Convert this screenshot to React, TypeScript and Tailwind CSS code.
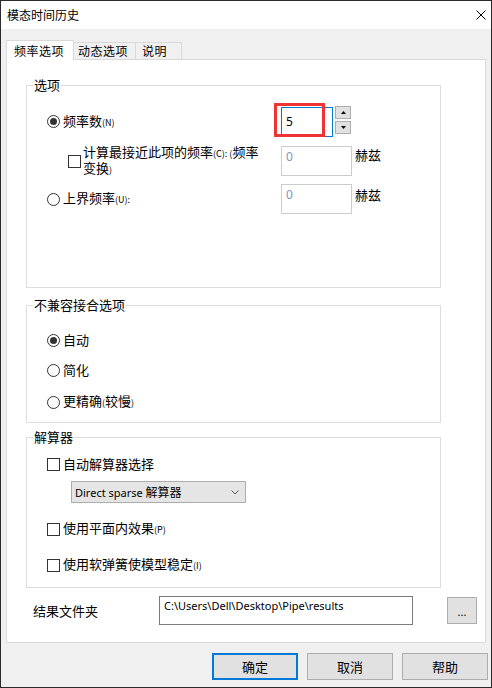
import React from 'react';

const Radio: React.FC<{ checked?: boolean }> = ({ checked }) => (
  <span className="w-[13px] h-[13px] rounded-full border border-[#333333] bg-white flex items-center justify-center shrink-0">
    {checked && <span className="w-[7px] h-[7px] rounded-full bg-[#333333]" />}
  </span>
);

const Check: React.FC = () => (
  <span className="w-[13px] h-[13px] border border-[#333333] bg-white shrink-0" />
);

const Small: React.FC<{ children: React.ReactNode }> = ({ children }) => (
  <span className="text-[9px]">{children}</span>
);

const App: React.FC = () => {
  return (
    <div className="w-[492px] h-[688px] border border-[#2b2b2b] bg-[#f0f0f0] flex flex-col font-['Microsoft_YaHei','Noto_Sans_CJK_SC',sans-serif] text-black text-[13px] leading-[16px]">
      {/* title bar */}
      <div className="h-[28px] bg-white flex items-center pl-[6px] pr-[5px] shrink-0">
        <span className="text-[12px]">模态时间历史</span>
        <svg className="ml-auto" width="10" height="10" viewBox="0 0 10 10">
          <path d="M0.5 0.5 L9.5 9.5 M9.5 0.5 L0.5 9.5" stroke="#000" strokeWidth="1" fill="none" />
        </svg>
      </div>

      <div className="flex-1 flex flex-col pl-[5px] pt-[11px]">
        {/* tabs */}
        <div className="flex items-end h-[19px] text-[12px] tracking-[0.5px]">
          <div className="relative z-10 -mb-px h-[20px] w-[68px] bg-white border border-b-0 border-[#d9d9d9] pl-[7px] flex items-center">
            频率选项
          </div>
          <div className="-ml-px h-[17px] w-[63px] border border-b-0 border-[#d9d9d9] pl-[4px] flex items-center">
            动态选项
          </div>
          <div className="-ml-px h-[17px] w-[47px] border border-b-0 border-[#d9d9d9] pl-[6px] flex items-center">
            说明
          </div>
        </div>

        {/* tab page */}
        <div className="w-[480px] h-[584px] bg-white border border-[#d9d9d9] flex flex-col">
          <fieldset className="ml-[19px] mt-[17px] w-[415px] h-[211px] border border-[#dcdcdc]">
            <legend className="ml-[6px] px-[1px] leading-[16px]">选项</legend>

            <div className="mt-[13px] flex h-[31px]">
              <div className="w-[254px] flex items-center pl-[20px] gap-[3px]">
                <Radio checked />
                <span>频率数<Small>(N)</Small></span>
              </div>
              <div className="relative mt-px w-[52px] h-[30px] border border-[#0078d7] pl-[4px] flex items-center text-[12px] font-['Noto_Sans',sans-serif]">
                5
                <div className="absolute left-[-8px] top-[-5px] w-[51px] h-[34px] border-[3px] border-[#ee3434]" />
              </div>
              <div className="ml-[2px] w-[16px] flex flex-col gap-[2px]">
                <div className="h-[13px] bg-[#e1e1e1] border border-[#adadad] flex items-center justify-center">
                  <svg width="5" height="3" viewBox="0 0 5 3"><path d="M0 3 L2.5 0 L5 3 Z" fill="#000" /></svg>
                </div>
                <div className="h-[13px] bg-[#e1e1e1] border border-[#adadad] flex items-center justify-center">
                  <svg width="5" height="3" viewBox="0 0 5 3"><path d="M0 0 L5 0 L2.5 3 Z" fill="#000" /></svg>
                </div>
              </div>
            </div>

            <div className="mt-[9px] flex h-[30px]">
              <div className="w-[254px] flex items-center pl-[41px] gap-[2px]">
                <Check />
                <span className="leading-[14px]">
                  计算最接近此项的频率<Small>(C): (</Small>频率
                  <br />
                  变换<Small>)</Small>
                </span>
              </div>
              <div className="w-[71px] h-[30px] border border-[#cccccc] pl-[4px] pt-[3px] text-[12px] text-[#7f96b8] font-['Noto_Sans',sans-serif] leading-[14px]">
                0
              </div>
              <span className="ml-[3px] mt-[1px]">赫兹</span>
            </div>

            <div className="mt-[8px] flex h-[30px]">
              <div className="w-[254px] flex items-center pl-[20px] gap-[3px]">
                <Radio />
                <span>上界频率<Small>(U):</Small></span>
              </div>
              <div className="w-[71px] h-[30px] border border-[#cccccc] pl-[4px] pt-[3px] text-[12px] text-[#7f96b8] font-['Noto_Sans',sans-serif] leading-[14px]">
                0
              </div>
              <span className="ml-[3px] mt-[3px]">赫兹</span>
            </div>
          </fieldset>

          <fieldset className="ml-[19px] mt-[9px] w-[415px] h-[126px] border border-[#dcdcdc]">
            <legend className="ml-[6px] px-[1px] leading-[16px]">不兼容接合选项</legend>
            <div className="mt-[19px] h-[16px] flex items-center pl-[20px] gap-[3px]">
              <Radio checked />
              <span>自动</span>
            </div>
            <div className="mt-[14px] h-[16px] flex items-center pl-[20px] gap-[3px]">
              <Radio />
              <span>简化</span>
            </div>
            <div className="mt-[16px] h-[16px] flex items-center pl-[20px] gap-[3px]">
              <Radio />
              <span>更精确<Small>(</Small>较慢<Small>)</Small></span>
            </div>
          </fieldset>

          <fieldset className="ml-[19px] mt-[6px] w-[415px] h-[159px] border border-[#dcdcdc]">
            <legend className="ml-[6px] px-[1px] leading-[16px]">解算器</legend>
            <div className="mt-[11px] h-[16px] flex items-center pl-[20px] gap-[3px]">
              <Check />
              <span>自动解算器选择</span>
            </div>
            <div className="mt-[9px] ml-[44px] w-[175px] h-[22px] bg-[#e5e5e5] border border-[#adadad] flex items-center pl-[3px] pr-[6px]">
              <span className="text-[12px]">
                <span className="font-['Noto_Sans',sans-serif] text-[11px]">Direct sparse </span>解算器
              </span>
              <svg className="ml-auto" width="8" height="5" viewBox="0 0 8 5">
                <path d="M0.5 0.5 L4 4 L7.5 0.5" stroke="#555" strokeWidth="1" fill="none" />
              </svg>
            </div>
            <div className="mt-[18px] h-[16px] flex items-center pl-[20px] gap-[3px]">
              <Check />
              <span>使用平面内效果<Small>(P)</Small></span>
            </div>
            <div className="mt-[20px] h-[16px] flex items-center pl-[20px] gap-[3px]">
              <Check />
              <span>使用软弹簧使模型稳定<Small>(I)</Small></span>
            </div>
          </fieldset>

          <div className="mt-[8px] flex items-start">
            <span className="ml-[26px] w-[126px] h-[29px] flex items-center">结果文件夹</span>
            <div className="w-[254px] h-[29px] border border-[#7a7a7a] pl-[4px] pt-[2px] text-[11px] leading-[14px] font-['Noto_Sans',sans-serif]">
              C:\Users\Dell\Desktop\Pipe\results
            </div>
            <div className="ml-[34px] mt-px w-[30px] h-[27px] bg-[#e1e1e1] border border-[#adadad] flex items-center justify-center pt-[3px] text-[11px] font-['Noto_Sans',sans-serif]">
              ...
            </div>
          </div>
        </div>

        {/* footer buttons */}
        <div className="mt-[10px] flex justify-end gap-[9px] pr-[3px]">
          <button className="w-[86px] h-[27px] bg-[#e1e1e1] border-2 border-[#0078d7]">确定</button>
          <button className="w-[86px] h-[27px] bg-[#e1e1e1] border border-[#adadad]">取消</button>
          <button className="w-[86px] h-[27px] bg-[#e1e1e1] border border-[#adadad]">帮助</button>
        </div>
      </div>
    </div>
  );
};

export default App;
